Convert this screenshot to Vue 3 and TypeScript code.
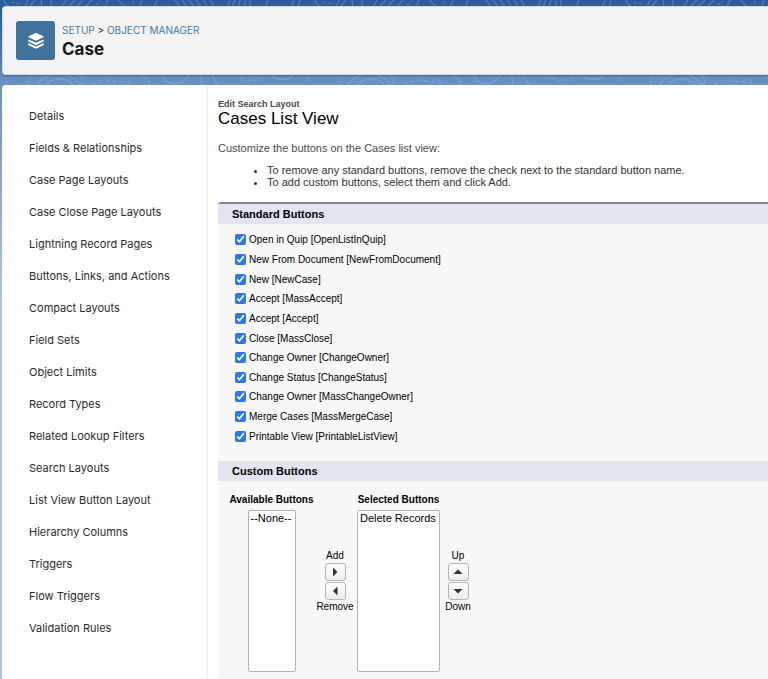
<script setup lang="ts">
import { ref } from 'vue'

const navItems: string[] = [
  'Details',
  'Fields & Relationships',
  'Case Page Layouts',
  'Case Close Page Layouts',
  'Lightning Record Pages',
  'Buttons, Links, and Actions',
  'Compact Layouts',
  'Field Sets',
  'Object Limits',
  'Record Types',
  'Related Lookup Filters',
  'Search Layouts',
  'List View Button Layout',
  'Hierarchy Columns',
  'Triggers',
  'Flow Triggers',
  'Validation Rules',
]

interface StandardButton {
  label: string
  name: string
  checked: boolean
}

const standardButtons = ref<StandardButton[]>([
  { label: 'Open in Quip', name: 'OpenListInQuip', checked: true },
  { label: 'New From Document', name: 'NewFromDocument', checked: true },
  { label: 'New', name: 'NewCase', checked: true },
  { label: 'Accept', name: 'MassAccept', checked: true },
  { label: 'Accept', name: 'Accept', checked: true },
  { label: 'Close', name: 'MassClose', checked: true },
  { label: 'Change Owner', name: 'ChangeOwner', checked: true },
  { label: 'Change Status', name: 'ChangeStatus', checked: true },
  { label: 'Change Owner', name: 'MassChangeOwner', checked: true },
  { label: 'Merge Cases', name: 'MassMergeCase', checked: true },
  { label: 'Printable View', name: 'PrintableListView', checked: true },
])

const available = ref<string[]>([])
const selected = ref<string[]>(['Delete Records'])
const availablePick = ref<string[]>([])
const selectedPick = ref<string[]>([])

function add(): void {
  selected.value.push(...availablePick.value.filter((b) => available.value.includes(b)))
  available.value = available.value.filter((b) => !availablePick.value.includes(b))
  availablePick.value = []
}

function remove(): void {
  available.value.push(...selectedPick.value)
  selected.value = selected.value.filter((b) => !selectedPick.value.includes(b))
  selectedPick.value = []
}

function move(step: number): void {
  const from = selected.value.indexOf(selectedPick.value[0])
  const to = from + step
  if (from < 0 || to < 0 || to >= selected.value.length) return
  const [item] = selected.value.splice(from, 1)
  selected.value.splice(to, 0, item)
}
</script>

<template>
  <div class="page">
    <svg class="contours" aria-hidden="true">
      <defs>
        <pattern id="topo" width="311" height="90" patternUnits="userSpaceOnUse">
          <g fill="none" stroke="#a9c6e6" stroke-opacity=".32" stroke-width="1.2">
            <path d="M4 0c1 4 4 6 7 7M28 0l-3 7M35 0l-6 7M41 0l1 7M51 0v7" />
            <path d="M66 0l-4 7M75 0l-7 7M83 0l-7 7M92 0l-7 7M108 0c-1 3-2 5-4 7M119 0c2 4 5 6 8 7M142 0l-3 7M157 0l-3 7" />
            <path d="M175 0l5 7M182 0l5 7M189 0l5 7M196 0l5 7M203 0l5 7M210 0l4 7M230 0l-3 7M235 0l-3 7M240 0l-2 7M245 0v7M250 0v7M268 0l-3 7M294 0l-3 7M300 0l-2 7" />
            <path d="M12 2c3 2 7 2 10 0M96 5l5-4M132 1l4 3" stroke-dasharray="3 2" />
            <path d="M37 86c5-13 29-17 40-4l5 4M45 86c7-10 23-9 29 0M78 75c5 3 7 6 2 10M75 75c5 0 10 1 12 3M140 75c8 3 10 7 9 11M162 75c4 10 20 13 27 0M200 75c2 4 2 7 1 11M212 75c2 4 4 7 7 11M272 75c5 6 16 6 21 0" />
            <path d="M93 85c8-8 25-4 38-1M240 77c6 5 15 5 22 0M28 85l3-9M308 77l-1 6M127 79l4 4" stroke-dasharray="4 3" />
          </g>
        </pattern>
      </defs>
      <rect width="100%" height="100%" fill="url(#topo)" />
    </svg>

    <header class="banner">
      <span class="tile">
        <svg viewBox="0 0 18 18" width="18" height="18" aria-hidden="true">
          <path fill="#fff" d="M8.600 1q.4-.2.8 0l7 3.300q.8.5 0 1L9.400 8.600q-.4.2-.8 0L1.600 5.300q-.8-.5 0-1z" />
          <path fill="none" stroke="#fff" stroke-width="2" stroke-linecap="round" stroke-linejoin="round" d="M2 8.700L9 12l7-3.300M2 12.400L9 15.700l7-3.300" />
        </svg>
      </span>
      <div>
        <nav class="crumbs" aria-label="Breadcrumb">
          <a href="#setup">SETUP</a> &gt; <a href="#objects">OBJECT MANAGER</a>
        </nav>
        <h1>Case</h1>
      </div>
    </header>

    <div class="card">
      <nav class="side" aria-label="Object settings">
        <a v-for="item in navItems" :key="item" href="#">{{ item }}</a>
      </nav>

      <main class="content">
        <p class="kicker">Edit Search Layout</p>
        <h2>Cases List View</h2>
        <p class="intro">Customize the buttons on the Cases list view:</p>
        <ul class="hints">
          <li>To remove any standard buttons, remove the check next to the standard button name.</li>
          <li>To add custom buttons, select them and click Add.</li>
        </ul>

        <form class="panel" @submit.prevent>
          <h3>Standard Buttons</h3>
          <div class="checks">
            <label v-for="b in standardButtons" :key="b.name">
              <input v-model="b.checked" type="checkbox" />
              <span>{{ b.label }} [{{ b.name }}]</span>
            </label>
          </div>

          <h3>Custom Buttons</h3>
          <div class="picker">
            <div class="list">
              <label for="available">Available Buttons</label>
              <select id="available" v-model="availablePick" class="narrow" multiple>
                <option v-if="!available.length" value="">--None--</option>
                <option v-for="b in available" :key="b">{{ b }}</option>
              </select>
            </div>
            <div class="arrows transfer">
              <span>Add</span>
              <button type="button" aria-label="Add" @click="add">
                <svg viewBox="0 0 10 10" width="10" height="10"><path d="M3 0.500L7.500 5L3 9.500z" /></svg>
              </button>
              <button type="button" aria-label="Remove" @click="remove">
                <svg viewBox="0 0 10 10" width="10" height="10"><path d="M7.500 0.500L3 5l4.500 4.500z" /></svg>
              </button>
              <span>Remove</span>
            </div>
            <div class="list">
              <label for="selected">Selected Buttons</label>
              <select id="selected" v-model="selectedPick" class="wide" multiple>
                <option v-for="b in selected" :key="b">{{ b }}</option>
              </select>
            </div>
            <div class="arrows">
              <span>Up</span>
              <button type="button" aria-label="Up" @click="move(-1)">
                <svg viewBox="0 0 10 10" width="10" height="10"><path d="M0.500 7L5 2.500L9.500 7z" /></svg>
              </button>
              <button type="button" aria-label="Down" @click="move(1)">
                <svg viewBox="0 0 10 10" width="10" height="10"><path d="M0.500 3L5 7.500L9.500 3z" /></svg>
              </button>
              <span>Down</span>
            </div>
          </div>
        </form>
      </main>
    </div>
  </div>
</template>

<style>
body {
  margin: 0;
}
</style>

<style scoped>
* {
  box-sizing: border-box;
}

.page {
  position: relative;
  display: flex;
  flex-direction: column;
  gap: 10px;
  min-height: 100vh;
  padding: 6px 0 0 2px;
  background: linear-gradient(#2b5c99 0, #2e609c 8px, #6b92c1 84px, #b0c4df 300px, #b0c4df 100%);
  font-family: Inter, sans-serif;
  color: #2b2b2b;
}

.contours {
  position: absolute;
  top: 0;
  left: 0;
  width: 100%;
  height: 90px;
}

.banner {
  position: relative;
  display: flex;
  align-items: center;
  gap: 7px;
  height: 69px;
  padding: 0 13px;
  border: 1px solid #d5d9e0;
  border-right: 0;
  border-radius: 4px 0 0 4px;
  background: #f3f3f3;
  box-shadow: 0 1px 2px rgba(0, 0, 0, 0.3);
}

.tile {
  display: flex;
  align-items: center;
  justify-content: center;
  width: 39px;
  height: 39px;
  border-radius: 3px;
  background: #3f739e;
}

.crumbs {
  font-size: 10px;
  line-height: 16px;
}

.crumbs a {
  color: #427bb0;
  text-decoration: none;
}

h1 {
  margin: 0;
  font-size: 17px;
  line-height: 22px;
  font-weight: 700;
  color: #181818;
}

.card {
  position: relative;
  display: flex;
  flex: 1;
  border-radius: 4px 0 0 0;
  background: #fff;
}

.side {
  flex: none;
  display: flex;
  flex-direction: column;
  width: 206px;
  padding: 15px 0 0 27px;
  border-right: 2px solid #f3f3f3;
}

.side a {
  height: 32px;
  font-size: 11px;
  line-height: 32px;
  color: #2b2b2b;
  text-decoration: none;
}

.content {
  flex: 1;
  min-width: 0;
  padding: 14px 0 0 10px;
  font-family: "Liberation Sans", Arial, sans-serif;
  font-size: 11px;
}

.kicker {
  margin: 0;
  font-size: 9px;
  line-height: 11px;
  font-weight: 700;
  color: #4a4a56;
}

h2 {
  margin: 0;
  font-size: 17px;
  line-height: 18px;
  font-weight: 400;
  color: #000;
}

.intro {
  margin: 14px 0 0;
  line-height: 12px;
  color: #4a4a56;
}

.hints {
  margin: 10px 0 14px;
  padding-left: 49px;
  line-height: 12px;
  color: #333;
}

.panel {
  border-top: 2px solid #7d86a2;
  border-radius: 3px 0 0 0;
  background: #f8f8f8;
  color: #000;
}

h3 {
  margin: 0;
  padding-left: 14px;
  background: #e2e5ee;
  font-size: 11px;
  line-height: 20px;
  font-weight: 700;
}

.checks {
  display: flex;
  flex-direction: column;
  height: 237px;
  padding: 6px 17px 15px;
}

.checks label {
  display: flex;
  flex: 1;
  align-items: center;
  gap: 3px;
  width: fit-content;
  font-size: 10px;
}

.checks input {
  width: 11px;
  height: 11px;
  margin: 0;
  accent-color: #2a78f6;
}

.picker {
  display: flex;
  padding: 13px 13px 7px;
}

.list {
  display: flex;
  flex-direction: column;
  align-items: center;
  gap: 4px;
  width: 81px;
}

.list label {
  font-size: 10px;
  line-height: 12px;
  font-weight: 700;
  white-space: nowrap;
}

select {
  height: 162px;
  padding: 1px 0;
  border: 1px solid #b3b3b3;
  border-radius: 2px;
  background: #fff;
  font-family: inherit;
  font-size: 11px;
  line-height: 12px;
  color: #000;
  overflow: hidden;
}

option {
  min-height: 0;
  padding: 0 2px;
}

.narrow {
  width: 48px;
}

.wide {
  width: 83px;
}

.arrows {
  display: flex;
  flex-direction: column;
  align-items: center;
  gap: 1px;
  width: 38px;
  padding-top: 56px;
  font-size: 10px;
  line-height: 12px;
}

.transfer {
  margin: 0 4px;
}

.arrows button {
  display: flex;
  align-items: center;
  justify-content: center;
  width: 21px;
  height: 18px;
  padding: 0;
  border: 1px solid #b5b5b5;
  border-radius: 3px;
  background: linear-gradient(#fff, #ececec);
}

.arrows path {
  fill: #333;
}
</style>
